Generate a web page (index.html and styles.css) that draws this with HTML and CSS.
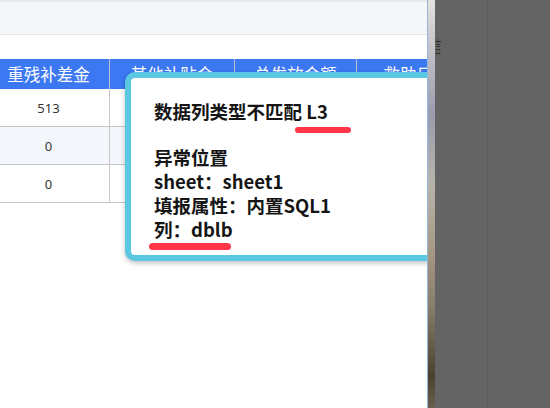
FILE: index.html
```html
<!DOCTYPE html>
<html lang="zh-CN">
<head>
<meta charset="UTF-8" />
<meta name="viewport" content="width=device-width, initial-scale=1" />
<title>数据校验</title>
<link rel="stylesheet" href="styles.css">
</head>
<body>

<div class="page">
  <div class="toolbar"></div>

  <table class="grid">
    <thead>
      <tr>
        <th class="c0">重残补差金</th>
        <th class="c1">其他补贴金</th>
        <th class="c2">总发放金额</th>
        <th class="c3">救助日期</th>
      </tr>
    </thead>
    <tbody>
      <tr><td>513</td><td></td><td></td><td></td></tr>
      <tr class="alt"><td>0</td><td></td><td></td><td></td></tr>
      <tr><td>0</td><td></td><td></td><td></td></tr>
    </tbody>
  </table>

  <div class="tip">
    <div class="tip-title">数据列类型不匹配 L3</div>
    <div class="tip-line">异常位置</div>
    <div class="tip-line">sheet：sheet1</div>
    <div class="tip-line">填报属性：内置SQL1</div>
    <div class="tip-line">列：dblb</div>
    <span class="mark mark-title"></span>
    <span class="mark mark-col"></span>
  </div>
</div>

<div class="strip"></div>

<div class="shade">
  <div class="shade-left"><span class="cut">言</span></div>
  <div class="shade-right"></div>
</div>

</body>
</html>
```

FILE: styles.css
```css
html, body { margin: 0; padding: 0; }
body {
  width: 550px; height: 408px; overflow: hidden;
  display: flex; background: #646464;
  font-family: "Noto Sans", "Noto Sans CJK SC", sans-serif;
}

.page {
  position: relative; width: 427px; height: 408px; flex: none;
  background: #fff; border-right: 1px solid #8fb7df; overflow: hidden;
}
.toolbar {
  height: 32px; background: #f5f6f8;
  border-top: 2px solid #e8e9eb; border-bottom: 1px solid #e6e7ea;
  margin-bottom: 24px;
}

.grid { border-collapse: collapse; margin-left: -12px; table-layout: fixed; width: 488px; }
.grid th {
  height: 30px; padding: 0; background: #3b78f2; color: #fff;
  font-family: "Noto Sans CJK SC", sans-serif; font-weight: normal; font-size: 16.5px;
  border-left: 1px solid #b9c2d0; white-space: nowrap; overflow: hidden;
}
.grid th.c0 { width: 121px; border-left: none; }
.grid th.c1 { width: 124px; }
.grid th.c2 { width: 121px; }
.grid td {
  height: 37px; padding: 0; text-align: center; color: #333; font-size: 13px;
  border-bottom: 1px solid #c6c6c6; border-left: 1px solid #c6c6c6;
}
.grid td:first-child { border-left: none; }
.grid tr.alt td { background: #f3f6fa; }

.tip {
  position: absolute; left: 125px; top: 72px; width: 300px;
  padding: 21px 0 14px 23px;
  background: #fff; border: 6px solid #5bc8e2; border-radius: 10px;
  box-shadow: 0 2px 5px rgba(0,0,0,0.25);
  font-family: "Noto Sans CJK SC", sans-serif; font-weight: bold; font-size: 18.5px;
  color: #151515;
}
.tip-title { line-height: 24px; margin-bottom: 22px; }
.tip-line { line-height: 24px; }

.mark { position: absolute; height: 6px; border-radius: 3px; background: #ff3648; }
.mark-title { left: 164px; top: 49px; width: 56px; }
.mark-col { left: 18px; top: 165px; width: 82px; height: 7px; border-radius: 4px; }

.strip {
  width: 7px; height: 408px; flex: none;
  background: linear-gradient(#e6e2de 0%, #c4c2c8 12%, #9a9cae 28%, #b8b4ac 45%, #a89c88 60%, #8a7e6c 75%, #4c4030 92%, #6a5e50 100%);
}

.shade { display: flex; flex: 1; }
.shade-left { width: 52px; border-right: 1px solid #5d5d5d; }
.cut {
  display: block; width: 17px; margin-top: 36px;
  transform: scaleX(0.36); transform-origin: left center;
  font-family: "Noto Sans CJK SC", sans-serif; font-size: 17px; line-height: 20px; color: #2e2e2e;
}
.shade-right { flex: 1; }
```
